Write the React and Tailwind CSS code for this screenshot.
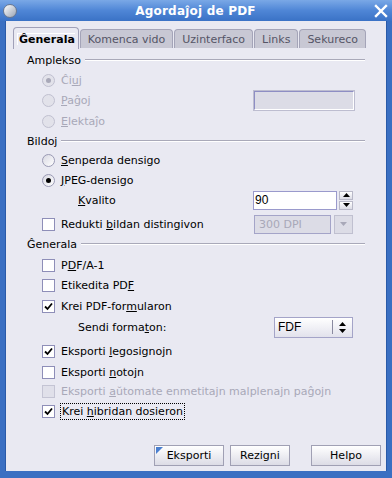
import React from "react";

const Check = () => (
  <svg width="9" height="9" viewBox="0 0 9 9" className="block">
    <path d="M1 4.5 L3.5 7 L8 1.5" fill="none" stroke="#000" strokeWidth="1.8" />
  </svg>
);

function Box({ checked, disabled }) {
  return (
    <div
      className={`w-[13px] h-[13px] shrink-0 border flex items-center justify-center ${
        disabled ? "border-[#c4c4d4] bg-[#e0e0ea]" : "border-[#8e8eb8] bg-white"
      }`}
    >
      {checked && <Check />}
    </div>
  );
}

function Radio({ checked, disabled }) {
  return (
    <div
      className={`w-[13px] h-[13px] shrink-0 rounded-full border flex items-center justify-center ${
        disabled
          ? "border-[#c0c0d0] bg-[#e2e2ea]"
          : "border-[#9a9ab4] bg-gradient-to-br from-[#d8d8e2] to-white"
      }`}
    >
      {checked && (
        <div className={`w-[5px] h-[5px] rounded-full ${disabled ? "bg-[#a8a8b8]" : "bg-black"}`} />
      )}
    </div>
  );
}

function Section({ label }) {
  return (
    <div className="flex items-center h-[20px] pl-[21px] pr-[21px] gap-[4px]">
      <span>{label}</span>
      <div className="flex-1 h-[2px] border-t border-[#a9a9b9] border-b border-b-white" />
    </div>
  );
}

function Arrow({ up, color = "#000" }) {
  return (
    <svg width="7" height="4" viewBox="0 0 7 4" className="block">
      {up ? <path d="M0 4 L3.5 0 L7 4Z" fill={color} /> : <path d="M0 0 L7 0 L3.5 4Z" fill={color} />}
    </svg>
  );
}

function Tab({ label, active }) {
  if (active)
    return (
      <div className="h-[22px] px-[3px] flex items-center font-bold text-black bg-[#e9e9f2] border border-b-0 border-[#a0a0b8] rounded-t-[4px] relative z-10 -mb-px">
        <span className="border-l border-t border-white pl-[1px]">Ĝenerala</span>
      </div>
    );
  return (
    <div className="h-[19px] px-[7px] flex items-center text-[#555566] bg-[#c8c8d4] border border-b-0 border-[#a4a4b8] rounded-t-[4px]">
      {label}
    </div>
  );
}

function Btn({ label, w, def }) {
  return (
    <div
      className={`${w} h-[21px] relative flex items-center justify-center border border-[#a0a0b4] bg-gradient-to-b from-white to-[#dcdce6] text-black`}
    >
      {def && (
        <svg width="7" height="7" viewBox="0 0 7 7" className="absolute left-[1px] top-[1px]">
          <path d="M0 0 L7 0 L0 7Z" fill="#4a7fd0" />
        </svg>
      )}
      {label}
    </div>
  );
}

export default function App() {
  return (
    <div className="w-[392px] h-[478px] flex flex-col bg-[#3a6fc2] font-['DejaVu_Sans',sans-serif] text-[11px] text-black leading-none select-none">
      {/* title bar */}
      <div className="h-[21px] shrink-0 flex items-center relative bg-gradient-to-b from-[#7aa8e6] via-[#4f86d6] to-[#3a72c6] px-[3px]">
        <div className="w-[14px] h-[14px] rounded-full bg-gradient-to-br from-white to-[#9aa4b4] border border-[#6a7890]" />
        <div className="flex-1 text-center text-white font-bold text-[12px] tracking-[0.2px]">Agordaĵoj de PDF</div>
        <svg width="14" height="14" viewBox="0 0 14 14" className="mr-[1px]">
          <path d="M2 2 L12 12 M12 2 L2 12" stroke="#fff" strokeWidth="2.4" strokeLinecap="square" />
        </svg>
      </div>
      {/* body */}
      <div className="flex-1 mx-[5px] mb-[7px] mt-0 bg-[#e9e9f2] flex flex-col border-l border-[#2a5aa8] border-r">
        <div className="flex items-end pl-[7px] pt-[5px] gap-[1px] h-[27px]">
          <Tab active />
          <Tab label="Komenca vido" />
          <Tab label="Uzinterfaco" />
          <Tab label="Links" />
          <Tab label="Sekureco" />
        </div>
        <div className="flex flex-col pt-[2px]">
          <Section label="Amplekso" />
          <div className="flex items-center h-[20px] pl-[36px] gap-[6px] text-[#a8a8b8]">
            <Radio checked disabled />
            <span>Ĉi<u>u</u>j</span>
          </div>
          <div className="flex items-center h-[21px] pl-[36px] gap-[6px] text-[#a8a8b8] pr-[32px]">
            <Radio disabled />
            <span><u>P</u>aĝoj</span>
            <div className="ml-auto w-[100px] h-[19px] bg-[#dcdce6] border border-t-[#8e8ec4] border-l-[#8e8ec4] border-r-white border-b-white outline outline-1 outline-[#bdbdd0]" />
          </div>
          <div className="flex items-center h-[20px] pl-[36px] gap-[6px] text-[#a8a8b8]">
            <Radio disabled />
            <span><u>E</u>lektaĵo</span>
          </div>
          <Section label="Bildoj" />
          <div className="flex items-center h-[19px] pl-[36px] gap-[6px]">
            <Radio />
            <span><u>S</u>enperda densigo</span>
          </div>
          <div className="flex items-center h-[20px] pl-[36px] gap-[6px]">
            <Radio checked />
            <span><u>J</u>PEG-densigo</span>
          </div>
          <div className="flex items-center h-[20px] pl-[72px] pr-[33px]">
            <span><u>K</u>valito</span>
            <div className="ml-auto flex items-center gap-[2px]">
              <div className="w-[84px] h-[19px] bg-white border border-[#9a9acc] flex items-center pl-[1px] text-[12px] font-['Liberation_Sans',sans-serif]">90</div>
              <div className="flex flex-col w-[14px] h-[19px] gap-px">
                <div className="flex-1 flex items-center justify-center bg-gradient-to-b from-white to-[#dcdce6] border border-[#b8b8c8]"><Arrow up /></div>
                <div className="flex-1 flex items-center justify-center bg-gradient-to-b from-white to-[#dcdce6] border border-[#b8b8c8]"><Arrow /></div>
              </div>
            </div>
          </div>
          <div className="flex items-center h-[20px] mt-[4px] pl-[36px] pr-[33px] gap-[6px]">
            <Box />
            <span>Redukti <u>b</u>ildan distingivon</span>
            <div className="ml-auto flex items-center gap-[3px]">
              <div className="w-[77px] h-[19px] bg-[#dcdce6] border border-[#a4a4c8] flex items-center pl-[4px] text-[#a8a8b8]">300 DPI</div>
              <div className="w-[19px] h-[19px] bg-[#dcdce6] border border-[#c0c0d0] flex items-center justify-center"><Arrow color="#a8a8b8" /></div>
            </div>
          </div>
          <Section label="Ĝenerala" />
          <div className="flex items-center h-[20px] mt-[1px] pl-[36px] gap-[6px]">
            <Box />
            <span>P<u>D</u>F/A-1</span>
          </div>
          <div className="flex items-center h-[20px] pl-[36px] gap-[6px]">
            <Box />
            <span>Etikedita PD<u>F</u></span>
          </div>
          <div className="flex items-center h-[20px] mt-[1px] pl-[36px] gap-[6px]">
            <Box checked />
            <span>Krei PDF-for<u>m</u>ularon</span>
          </div>
          <div className="flex items-center h-[20px] mt-[1px] pl-[72px] pr-[33px]">
            <span>Sendi forma<u>t</u>on:</span>
            <div className="ml-auto w-[79px] h-[21px] bg-gradient-to-b from-white to-[#e2e2ec] border border-[#a4a4c8] flex items-center pl-[3px] text-[12px] font-['Liberation_Sans',sans-serif]">
              <span className="flex-1">FDF</span>
              <div className="w-px h-[14px] bg-[#8a8aa0] mr-[6px]" />
              <div className="flex flex-col gap-[3px] mr-[6px]"><Arrow up /><Arrow /></div>
            </div>
          </div>
          <div className="flex items-center h-[20px] mt-[4px] pl-[36px] gap-[6px]">
            <Box checked />
            <span>Eksporti <u>l</u>egosignojn</span>
          </div>
          <div className="flex items-center h-[20px] mt-[1px] pl-[36px] gap-[6px]">
            <Box />
            <span>Eksporti <u>n</u>otojn</span>
          </div>
          <div className="flex items-center h-[20px] mt-[-1px] pl-[36px] gap-[6px] text-[#a8a8b8]">
            <Box disabled />
            <span>Eksporti <u>a</u>ŭtomate enmetitajn malplenajn paĝojn</span>
          </div>
          <div className="flex items-center h-[20px] pl-[36px] gap-[5px]">
            <Box checked />
            <span className="border border-dotted border-black px-[1px] py-[2px]">Krei <u>h</u>ibridan dosieron</span>
          </div>
        </div>
        <div className="mt-auto flex items-center justify-end pr-[5px] pb-[5px] gap-[6px]">
          <Btn label="Eksporti" w="w-[70px]" def />
          <Btn label="Rezigni" w="w-[60px]" />
          <div className="w-[9px]" />
          <Btn label="Helpo" w="w-[70px]" />
        </div>
      </div>
    </div>
  );
}
